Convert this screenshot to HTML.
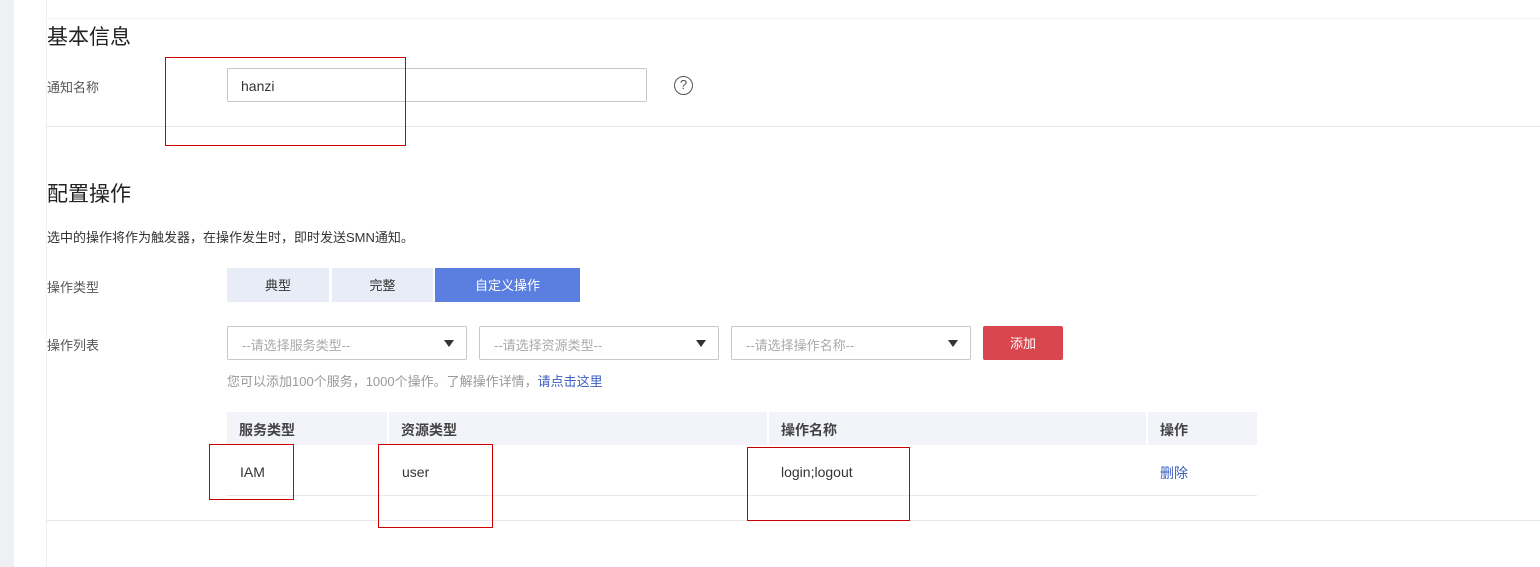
<!DOCTYPE html>
<html><head><meta charset="utf-8"><style>
*{margin:0;padding:0;box-sizing:border-box}
body{width:1540px;height:567px;overflow:hidden;background:#fff;font-family:"Liberation Sans","Noto Sans CJK SC",sans-serif;color:#333;position:relative;font-size:13px}
.a{position:absolute}
.hl{position:absolute;height:1px;background:#e8e8ec}
.red{position:absolute;border:1px solid #cc0000;z-index:5}
.sel{position:absolute;top:326px;width:240px;height:34px;border:1px solid #c8c8cc;border-radius:2px;color:#aaa;padding:8px 0 0 14px;font-size:13px}
.sel:after{content:"";position:absolute;right:12px;top:13px;border-left:5px solid transparent;border-right:5px solid transparent;border-top:7px solid #333}
.th{position:absolute;top:412px;height:33px;background:#f2f4fa;font-weight:bold;color:#444;font-size:14px;padding:8px 0 0 12px}
</style></head><body>
<div class="a" style="left:0;top:0;width:14px;height:567px;background:#eff0f4"></div>
<div class="a" style="left:46px;top:0;width:1px;height:567px;background:#f0f0f0"></div>
<div class="hl" style="left:46px;top:18px;width:1494px;background:#f2f2f2"></div>
<div class="a" style="left:47px;top:21px;font-size:21px;color:#222">基本信息</div>
<div class="a" style="left:47px;top:77px;color:#555">通知名称</div>
<div class="a" style="left:227px;top:68px;width:420px;height:34px;border:1px solid #c8c8cc;border-radius:2px;padding:9px 0 0 13px;font-size:14px;color:#333">hanzi</div>
<div class="a" style="left:674px;top:76px;width:19px;height:19px;border:1.5px solid #555;border-radius:50%;font-size:13px;text-align:center;line-height:16px;color:#555">?</div>
<div class="hl" style="left:46px;top:126px;width:1494px"></div>
<div class="a" style="left:47px;top:178px;font-size:21px;color:#222">配置操作</div>
<div class="a" style="left:47px;top:227px;color:#333">选中的操作将作为触发器，在操作发生时，即时发送SMN通知。</div>
<div class="a" style="left:47px;top:277px;color:#555">操作类型</div>
<div class="a" style="left:227px;top:268px;width:102px;height:34px;background:#e8ecf6;text-align:center;line-height:36px">典型</div>
<div class="a" style="left:332px;top:268px;width:101px;height:34px;background:#e8ecf6;text-align:center;line-height:36px">完整</div>
<div class="a" style="left:435px;top:268px;width:145px;height:34px;background:#5b7fe0;color:#fff;text-align:center;line-height:36px">自定义操作</div>
<div class="a" style="left:47px;top:335px;color:#555">操作列表</div>
<div class="sel" style="left:227px">--请选择服务类型--</div>
<div class="sel" style="left:479px">--请选择资源类型--</div>
<div class="sel" style="left:731px">--请选择操作名称--</div>
<div class="a" style="left:983px;top:326px;width:80px;height:34px;background:#d9464d;border-radius:2px;color:#fff;text-align:center;line-height:36px">添加</div>
<div class="a" style="left:227px;top:371px;color:#999">您可以添加100个服务，1000个操作。了解操作详情，<span style="color:#3b5fc0">请点击这里</span></div>
<div class="th" style="left:227px;width:160px">服务类型</div>
<div class="th" style="left:389px;width:378px">资源类型</div>
<div class="th" style="left:769px;width:377px">操作名称</div>
<div class="th" style="left:1148px;width:109px">操作</div>
<div class="a" style="left:240px;top:464px;font-size:14px">IAM</div>
<div class="a" style="left:402px;top:464px;font-size:14px">user</div>
<div class="a" style="left:781px;top:464px;font-size:14px">login;logout</div>
<div class="a" style="left:1160px;top:463px;font-size:14px;color:#3b5fc0">删除</div>
<div class="hl" style="left:227px;top:495px;width:1030px"></div>
<div class="hl" style="left:46px;top:520px;width:1494px"></div>
<div class="red" style="left:165px;top:57px;width:241px;height:89px"></div>
<div class="red" style="left:209px;top:444px;width:85px;height:56px"></div>
<div class="red" style="left:378px;top:444px;width:115px;height:84px"></div>
<div class="red" style="left:747px;top:447px;width:163px;height:74px"></div>
</body></html>
